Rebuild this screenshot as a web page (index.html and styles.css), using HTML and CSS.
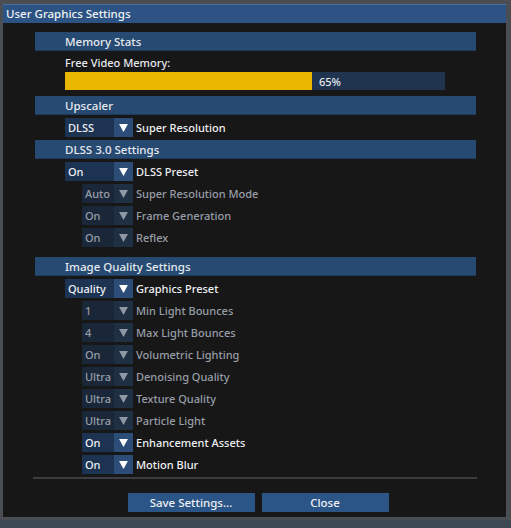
FILE: index.html
```html
<!DOCTYPE html>
<html lang="en">
<head>
    <meta charset="UTF-8">
    <title>User Graphics Settings</title>
    <link rel="stylesheet" href="styles.css">
</head>
<body>
    <!-- Settings window -->
    <div class="window">
        <div class="title-bar">User Graphics Settings</div>

        <div class="content">
            <!-- Memory -->
            <div class="section-header">Memory Stats</div>
            <div class="mem-label">Free Video Memory:</div>
            <div class="mem-bar">
                <div class="mem-fill" style="width: 65%"></div>
                <span class="mem-text">65%</span>
            </div>

            <!-- Upscaler -->
            <div class="section-header">Upscaler</div>
            <div class="row">
                <div class="dropdown"><span class="value">DLSS</span><span class="arrow"><svg viewBox="0 0 10 9"><polygon points="0,0 10,0 5,9"/></svg></span></div>
                <span class="label">Super Resolution</span>
            </div>

            <!-- DLSS -->
            <div class="section-header">DLSS 3.0 Settings</div>
            <div class="row">
                <div class="dropdown"><span class="value">On</span><span class="arrow"><svg viewBox="0 0 10 9"><polygon points="0,0 10,0 5,9"/></svg></span></div>
                <span class="label">DLSS Preset</span>
            </div>
            <div class="row sub disabled">
                <div class="dropdown"><span class="value">Auto</span><span class="arrow"><svg viewBox="0 0 10 9"><polygon points="0,0 10,0 5,9"/></svg></span></div>
                <span class="label">Super Resolution Mode</span>
            </div>
            <div class="row sub disabled">
                <div class="dropdown"><span class="value">On</span><span class="arrow"><svg viewBox="0 0 10 9"><polygon points="0,0 10,0 5,9"/></svg></span></div>
                <span class="label">Frame Generation</span>
            </div>
            <div class="row sub disabled">
                <div class="dropdown"><span class="value">On</span><span class="arrow"><svg viewBox="0 0 10 9"><polygon points="0,0 10,0 5,9"/></svg></span></div>
                <span class="label">Reflex</span>
            </div>

            <!-- Image quality -->
            <div class="section-header spaced">Image Quality Settings</div>
            <div class="row">
                <div class="dropdown"><span class="value">Quality</span><span class="arrow"><svg viewBox="0 0 10 9"><polygon points="0,0 10,0 5,9"/></svg></span></div>
                <span class="label">Graphics Preset</span>
            </div>
            <div class="row sub disabled">
                <div class="dropdown"><span class="value">1</span><span class="arrow"><svg viewBox="0 0 10 9"><polygon points="0,0 10,0 5,9"/></svg></span></div>
                <span class="label">Min Light Bounces</span>
            </div>
            <div class="row sub disabled">
                <div class="dropdown"><span class="value">4</span><span class="arrow"><svg viewBox="0 0 10 9"><polygon points="0,0 10,0 5,9"/></svg></span></div>
                <span class="label">Max Light Bounces</span>
            </div>
            <div class="row sub disabled">
                <div class="dropdown"><span class="value">On</span><span class="arrow"><svg viewBox="0 0 10 9"><polygon points="0,0 10,0 5,9"/></svg></span></div>
                <span class="label">Volumetric Lighting</span>
            </div>
            <div class="row sub disabled">
                <div class="dropdown"><span class="value">Ultra</span><span class="arrow"><svg viewBox="0 0 10 9"><polygon points="0,0 10,0 5,9"/></svg></span></div>
                <span class="label">Denoising Quality</span>
            </div>
            <div class="row sub disabled">
                <div class="dropdown"><span class="value">Ultra</span><span class="arrow"><svg viewBox="0 0 10 9"><polygon points="0,0 10,0 5,9"/></svg></span></div>
                <span class="label">Texture Quality</span>
            </div>
            <div class="row sub disabled">
                <div class="dropdown"><span class="value">Ultra</span><span class="arrow"><svg viewBox="0 0 10 9"><polygon points="0,0 10,0 5,9"/></svg></span></div>
                <span class="label">Particle Light</span>
            </div>
            <div class="row sub">
                <div class="dropdown"><span class="value">On</span><span class="arrow"><svg viewBox="0 0 10 9"><polygon points="0,0 10,0 5,9"/></svg></span></div>
                <span class="label">Enhancement Assets</span>
            </div>
            <div class="row sub">
                <div class="dropdown"><span class="value">On</span><span class="arrow"><svg viewBox="0 0 10 9"><polygon points="0,0 10,0 5,9"/></svg></span></div>
                <span class="label">Motion Blur</span>
            </div>
        </div>

        <div class="separator"></div>

        <!-- Buttons -->
        <div class="buttons">
            <button class="btn">Save Settings...</button>
            <button class="btn">Close</button>
        </div>
    </div>
</body>
</html>
```

FILE: styles.css
```css
/* Page background (game scene behind window) */
body {
    margin: 0;
    height: 528px;
    overflow: hidden;
    font-family: "Noto Sans", "DejaVu Sans", sans-serif;
    font-size: 11px;
    font-weight: 500;
    color: #e6e9ee;
    background: linear-gradient(to bottom, #4a4d52 0, #4a4d52 520px, #3c4753 520px);
}

/* Window frame */
.window {
    margin: 4px 0 0 2px;
    width: 505px;
    height: 514px;
    background-color: #171717;
    border: 1px solid #4a5058;
    border-top: none;
    box-sizing: border-box;
    display: flex;
    flex-direction: column;
}

.title-bar {
    height: 18px;
    line-height: 18px;
    padding-left: 3px;
    background-color: #2d5384;
    border-top: 1px solid #4d6f9c;
    font-size: 11.5px;
    color: #f0f2f5;
}

.content {
    padding: 9px 0 0 32px;
    width: 441px;
}

/* Section headers */
.section-header {
    height: 19px;
    line-height: 19px;
    padding-left: 30px;
    background-color: #264a72;
    border-bottom: 1px solid #1f3b5c;
    box-sizing: border-box;
    font-size: 11.5px;
    margin-bottom: 3px;
}

.section-header.spaced {
    margin-top: 10px;
}

/* Memory bar */
.mem-label {
    margin-left: 30px;
    height: 17px;
    line-height: 17px;
}

.mem-bar {
    margin: 1px 0 6px 30px;
    width: 380px;
    height: 18px;
    background-color: #20344f;
    display: flex;
    align-items: center;
}

.mem-fill {
    height: 100%;
    background-color: #e9b600;
}

.mem-text {
    margin-left: 7px;
}

/* Dropdown rows */
.row {
    display: flex;
    align-items: center;
    height: 19px;
    margin: 0 0 3px 30px;
}

.row.sub {
    margin-left: 47px;
}

.dropdown {
    display: flex;
    width: 68px;
    height: 19px;
    background-color: #1d3352;
}

.row.sub .dropdown {
    width: 51px;
}

.dropdown .value {
    flex: 1;
    line-height: 19px;
    padding-left: 3px;
    color: #eef0f3;
}

.dropdown .arrow {
    width: 19px;
    background-color: #2b4d78;
    display: flex;
    align-items: center;
    justify-content: center;
}

.dropdown svg {
    width: 9px;
    height: 8px;
    fill: #ffffff;
}

.label {
    margin-left: 3px;
    color: #eef0f3;
}

/* Greyed out settings */
.disabled .dropdown {
    background-color: #1a2738;
}

.disabled .dropdown .value,
.disabled .label {
    color: #979ea7;
}

.disabled .dropdown .arrow {
    background-color: #1f2f44;
}

.disabled .dropdown svg {
    fill: #8f99a6;
}

/* Bottom area */
.separator {
    margin: 0 0 0 30px;
    width: 444px;
    height: 2px;
    background-color: #3b3d40;
}

.buttons {
    display: flex;
    justify-content: center;
    gap: 7px;
    margin-top: 14px;
    padding-left: 7px;
}

.btn {
    width: 127px;
    height: 19px;
    padding: 0;
    border: none;
    background-color: #2c5587;
    color: #eef0f3;
    font-family: inherit;
    font-size: 11.5px;
    font-weight: 500;
}
```
